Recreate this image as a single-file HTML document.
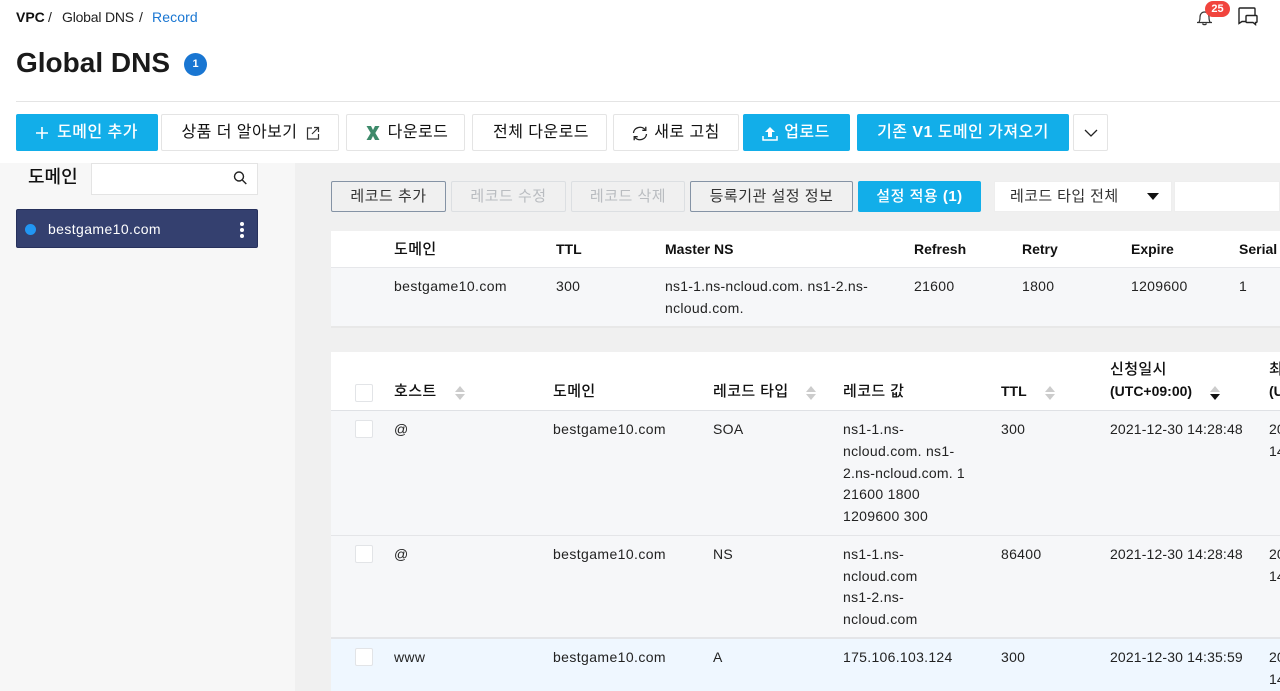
<!DOCTYPE html>
<html lang="ko"><head><meta charset="utf-8"><title>Global DNS</title>
<style>
*{box-sizing:border-box}
html,body{margin:0;padding:0;width:1280px;height:691px;overflow:hidden;background:#fff}
body{position:relative;font-family:"Liberation Sans","Noto Sans CJK KR",sans-serif;font-size:14px;color:#222}
.a{position:absolute}
.t{position:absolute;white-space:nowrap;line-height:20px;height:20px;letter-spacing:.3px;color:#222}
.dom{letter-spacing:.4px}
.dt{letter-spacing:.15px}
.b{font-weight:700;color:#111}
.k{font-weight:500;color:#111;letter-spacing:.4px;font-size:15px;margin-top:1px}
.btn{position:absolute;top:114px;height:37px;border:1px solid #e4e4e4;border-radius:2px;background:#fff;color:#111;font-size:16px;letter-spacing:.45px;line-height:36px;text-align:center;white-space:nowrap}
.btn.p{background:#12aee9;border-color:#12aee9;color:#fff;font-weight:500}
.act{position:absolute;top:181px;height:31px;border:1px solid #8593a5;border-radius:2px;background:#f0f0f0;color:#333;font-size:15px;letter-spacing:.5px;line-height:29px;text-align:center;white-space:nowrap}
.act.d{border-color:#dcdfe2;color:#b9bcc0}
.cb{position:absolute;left:355px;width:18px;height:18px;background:#fff;border:1px solid #e2e4e7;border-radius:2px}
.up,.dn{position:absolute;width:0;height:0;border-left:5px solid transparent;border-right:5px solid transparent}
.up{border-bottom:6px solid #ccc}
.dn{border-top:6px solid #ccc}
svg{position:absolute;overflow:visible}
</style></head><body>

<div class="t b" style="left:16px;top:7px;letter-spacing:0">VPC</div>
<div class="t" style="left:48px;top:7px">/</div>
<div class="t" style="left:62px;top:7px;letter-spacing:-.2px">Global DNS</div>
<div class="t" style="left:139px;top:7px">/</div>
<div class="t" style="left:152px;top:7px;color:#1976d2;letter-spacing:.1px">Record</div>

<svg style="left:1196px;top:8px" width="17" height="18" viewBox="0 0 17 18" fill="none" stroke="#333" stroke-width="1.2"><path d="M1 14.500h15M2.800 14.500c1-1.500 1.200-3 1.200-5.500 0-3 2-5 4.500-5s4.500 2 4.500 5c0 2.500.2 4 1.200 5.500M6.500 15.500c.5 1.500 3.500 1.500 4 0"/></svg>
<div class="a" style="left:1205px;top:1px;width:25px;height:16px;border-radius:8px;background:#f1443d;color:#fff;font-size:11px;font-weight:700;line-height:16px;text-align:center">25</div>
<svg style="left:1237px;top:7px" width="21" height="19" viewBox="0 0 21 19" fill="none" stroke="#222" stroke-width="1.400"><path d="M9 14.500H5l-3 2V2Q2 1 3 1h14q1 0 1 1v6"/><path d="M10 8.500h9q1 0 1 1v5q0 1-1 1h-.5v2l-2.500-2h-6q-1 0-1-1v-5q0-1 1-1z" fill="#fff"/></svg>

<div class="t b" style="left:16px;top:45px;height:36px;line-height:36px;font-size:28px;letter-spacing:0;color:#1a1a1a">Global DNS</div>
<div class="a" style="left:184px;top:53px;width:23px;height:23px;border-radius:50%;background:#1976d2;color:#fff;font-size:11px;font-weight:700;line-height:23px;text-align:center">1</div>
<div class="a" style="left:16px;top:101px;width:1264px;height:1px;background:#e4e4e4"></div>

<div class="btn p" style="left:16px;width:142px;padding-left:21px">도메인 추가</div>
<svg style="left:35px;top:126px" width="14" height="14" viewBox="0 0 14 14" stroke="#fff" stroke-width="1.600"><path d="M7 1v12M1 7h12"/></svg>
<div class="btn" style="left:161px;width:178px;padding-right:21px">상품 더 알아보기</div>
<svg style="left:306px;top:126px" width="14" height="14" viewBox="0 0 14 14" fill="none" stroke="#333" stroke-width="1.200"><path d="M6 2H1.500v11h11V8M8 1.500h4.500V6M12.500 1.500L6 8"/></svg>
<div class="btn" style="left:346px;width:119px;padding-left:25px">다운로드</div>
<svg style="left:366px;top:125px" width="14" height="16" viewBox="0 0 14 16"><path d="M.5 1h4.500l2 4 2-4h4.500L9.300 8l4.200 7H9l-2-4-2 4H.5l4.200-7z" fill="#3d8a6a"/></svg>
<div class="btn" style="left:472px;width:135px;padding-left:3px">전체 다운로드</div>
<div class="btn" style="left:613px;width:126px;padding-left:22px">새로 고침</div>
<svg style="left:632px;top:126px" width="16" height="15" viewBox="0 0 16 15" fill="none" stroke="#222" stroke-width="1.300"><path d="M1.500 7a6.500 6 0 0 1 11.500-3.500M14.500 8A6.500 6 0 0 1 3 11.500"/><path d="M13.800 .8v3.500h-3.500M2.200 14.200v-3.500h3.500"/></svg>
<div class="btn p" style="left:743px;width:107px;padding-left:21px">업로드</div>
<svg style="left:762px;top:127px" width="16" height="14" viewBox="0 0 16 14" fill="#fff"><path d="M8 0l5 5H10v5H6V5H3z"/><path d="M1 9v4h14V9" fill="none" stroke="#fff" stroke-width="1.500"/></svg>
<div class="btn p" style="left:857px;width:212px">기존 <b>V1</b> 도메인 가져오기</div>
<div class="btn" style="left:1073px;width:35px"></div>
<svg style="left:1084px;top:129px" width="14" height="8" viewBox="0 0 14 8" fill="none" stroke="#222" stroke-width="1.300"><path d="M1 1l6 6 6-6"/></svg>

<div class="a" style="left:0;top:163px;width:295px;height:528px;background:#f7f7f7"></div>
<div class="a" style="left:295px;top:163px;width:985px;height:528px;background:#f0f0f0"></div>

<div class="t k" style="left:28px;top:166px;font-size:18px;letter-spacing:0">도메인</div>
<div class="a" style="left:91px;top:163px;width:167px;height:32px;background:#fff;border:1px solid #e4e4e4"></div>
<svg style="left:232px;top:170px" width="16" height="16" viewBox="0 0 16 16" fill="none" stroke="#222" stroke-width="1.400"><circle cx="7" cy="6.500" r="4.500"/><path d="M10.300 10l4 4"/></svg>
<div class="a" style="left:16px;top:209px;width:242px;height:39px;background:#34406f;border:1px solid #27315c;border-radius:2px"></div>
<div class="a" style="left:25px;top:224px;width:11px;height:11px;border-radius:50%;background:#2196f3"></div>
<div class="t dom" style="left:48px;top:219px;color:#fff">bestgame10.com</div>
<div class="a" style="left:240px;top:222px;width:4px;height:4px;border-radius:50%;background:#fff"></div>
<div class="a" style="left:240px;top:228px;width:4px;height:4px;border-radius:50%;background:#fff"></div>
<div class="a" style="left:240px;top:234px;width:4px;height:4px;border-radius:50%;background:#fff"></div>

<div class="act" style="left:331px;width:115px">레코드 추가</div>
<div class="act d" style="left:451px;width:115px">레코드 수정</div>
<div class="act d" style="left:571px;width:114px">레코드 삭제</div>
<div class="act" style="left:690px;width:163px">등록기관 설정 정보</div>
<div class="act" style="left:858px;width:123px;background:#12aee9;border-color:#12aee9;color:#fff;font-weight:500">설정 적용 <b>(1)</b></div>
<div class="a" style="left:994px;top:181px;width:178px;height:31px;background:#fff;border:1px solid #eee"></div>
<div class="t" style="left:1010px;top:187px;letter-spacing:.4px;font-size:15px;color:#333">레코드 타입 전체</div>
<div class="a" style="left:1147px;top:193px;border-left:6px solid transparent;border-right:6px solid transparent;border-top:7px solid #111"></div>
<div class="a" style="left:1174px;top:181px;width:106px;height:31px;background:#fff;border:1px solid #eee"></div>

<!-- info table -->
<div class="a" style="left:331px;top:231px;width:949px;height:97px;background:#f6f7f9;border-bottom:2px solid #e8e8e8"></div>
<div class="a" style="left:331px;top:231px;width:949px;height:37px;background:#fff;border-bottom:1px solid #e6e7ea"></div>
<div class="t k" style="left:394px;top:239px">도메인</div>
<div class="t b" style="left:556px;top:239px;letter-spacing:0">TTL</div>
<div class="t b" style="left:665px;top:239px;letter-spacing:0">Master NS</div>
<div class="t b" style="left:914px;top:239px;letter-spacing:0">Refresh</div>
<div class="t b" style="left:1022px;top:239px;letter-spacing:0">Retry</div>
<div class="t b" style="left:1131px;top:239px;letter-spacing:0">Expire</div>
<div class="t b" style="left:1239px;top:239px;letter-spacing:0">Serial</div>
<div class="t dom" style="left:394px;top:276px">bestgame10.com</div>
<div class="t" style="left:556px;top:276px">300</div>
<div class="t" style="left:665px;top:276px;letter-spacing:.23px">ns1-1.ns-ncloud.com. ns1-2.ns-</div>
<div class="t" style="left:665px;top:298px">ncloud.com.</div>
<div class="t" style="left:914px;top:276px">21600</div>
<div class="t" style="left:1022px;top:276px">1800</div>
<div class="t" style="left:1131px;top:276px">1209600</div>
<div class="t" style="left:1239px;top:276px">1</div>

<!-- records table -->
<div class="a" style="left:331px;top:352px;width:949px;height:59px;background:#fff;border-bottom:1px solid #dfe1e5"></div>
<div class="a" style="left:331px;top:411px;width:949px;height:125px;background:#f6f7f9;border-bottom:1px solid #e4e5e8"></div>
<div class="a" style="left:331px;top:536px;width:949px;height:103px;background:#f6f7f9;border-bottom:2px solid #e4e5e8"></div>
<div class="a" style="left:331px;top:639px;width:949px;height:52px;background:#eff7ff"></div>

<div class="cb" style="top:384px"></div>
<div class="cb" style="top:420px"></div>
<div class="cb" style="top:545px"></div>
<div class="cb" style="top:648px"></div>

<div class="t k" style="left:394px;top:381px">호스트</div>
<div class="up" style="left:455px;top:386px"></div><div class="dn" style="left:455px;top:394px"></div>
<div class="t k" style="left:553px;top:381px">도메인</div>
<div class="t k" style="left:713px;top:381px">레코드 타입</div>
<div class="up" style="left:806px;top:386px"></div><div class="dn" style="left:806px;top:394px"></div>
<div class="t k" style="left:843px;top:381px">레코드 값</div>
<div class="t b" style="left:1001px;top:381px;letter-spacing:0">TTL</div>
<div class="up" style="left:1045px;top:386px"></div><div class="dn" style="left:1045px;top:394px"></div>
<div class="t k" style="left:1110px;top:359px">신청일시</div>
<div class="t b" style="left:1110px;top:381px;letter-spacing:0">(UTC+09:00)</div>
<div class="up" style="left:1210px;top:386px"></div><div class="dn" style="left:1210px;top:394px;border-top-color:#111"></div>
<div class="t k" style="left:1269px;top:359px">최종</div>
<div class="t b" style="left:1269px;top:381px;letter-spacing:0">(UTC</div>

<div class="t" style="left:394px;top:419px">@</div>
<div class="t dom" style="left:553px;top:419px">bestgame10.com</div>
<div class="t" style="left:713px;top:419px">SOA</div>
<div class="t" style="left:843px;top:419px">ns1-1.ns-</div>
<div class="t" style="left:843px;top:441px">ncloud.com. ns1-</div>
<div class="t" style="left:843px;top:463px;letter-spacing:.2px">2.ns-ncloud.com. 1</div>
<div class="t" style="left:843px;top:484px">21600 1800</div>
<div class="t" style="left:843px;top:506px">1209600 300</div>
<div class="t" style="left:1001px;top:419px">300</div>
<div class="t dt" style="left:1110px;top:419px">2021-12-30 14:28:48</div>
<div class="t dt" style="left:1269px;top:419px">2021-12-30</div>
<div class="t dt" style="left:1269px;top:441px">14:28:48</div>

<div class="t" style="left:394px;top:544px">@</div>
<div class="t dom" style="left:553px;top:544px">bestgame10.com</div>
<div class="t" style="left:713px;top:544px">NS</div>
<div class="t" style="left:843px;top:544px">ns1-1.ns-</div>
<div class="t" style="left:843px;top:566px">ncloud.com</div>
<div class="t" style="left:843px;top:587px">ns1-2.ns-</div>
<div class="t" style="left:843px;top:609px">ncloud.com</div>
<div class="t" style="left:1001px;top:544px">86400</div>
<div class="t dt" style="left:1110px;top:544px">2021-12-30 14:28:48</div>
<div class="t dt" style="left:1269px;top:544px">2021-12-30</div>
<div class="t dt" style="left:1269px;top:566px">14:28:48</div>

<div class="t" style="left:394px;top:647px">www</div>
<div class="t dom" style="left:553px;top:647px">bestgame10.com</div>
<div class="t" style="left:713px;top:647px">A</div>
<div class="t" style="left:843px;top:647px">175.106.103.124</div>
<div class="t" style="left:1001px;top:647px">300</div>
<div class="t dt" style="left:1110px;top:647px">2021-12-30 14:35:59</div>
<div class="t dt" style="left:1269px;top:647px">2021-12-30</div>
<div class="t dt" style="left:1269px;top:669px">14:35:59</div>

</body></html>
